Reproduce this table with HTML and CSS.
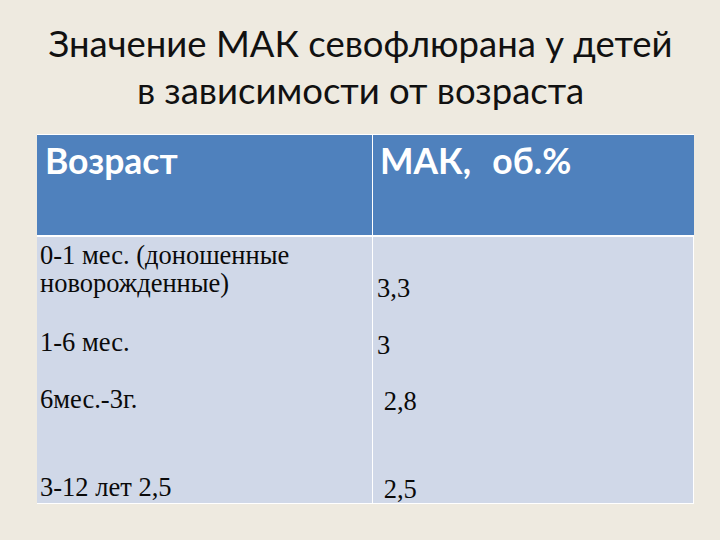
FILE: index.html
```html
<!DOCTYPE html>
<html lang="ru">
<head>
<meta charset="utf-8">
<link rel="stylesheet" href="styles.css">
</head>
<body>
<div class="slide">
  <h1 class="title">Значение МАК севофлюрана у детей<br>в зависимости от возраста</h1>
  <div class="table">
    <div class="th">Возраст</div>
    <div class="th th-right">МАК,&nbsp; об.%</div>
    <div class="body">
      <div class="td td-top">0-1 мес. (доношенные новорожденные)</div>
      <div class="td td-right td-first">3,3</div>
      <div class="td td-second">1-6 мес.</div>
      <div class="td td-right">3</div>
      <div class="td">6мес.-3г.</div>
      <div class="td td-right">&nbsp;2,8</div>
      <div class="td">3-12 лет 2,5</div>
      <div class="td td-right">&nbsp;2,5</div>
    </div>
  </div>
</div>
</body>
</html>
```
FILE: styles.css
```css
* { box-sizing: border-box; }
html, body { margin: 0; padding: 0; }
body {
  width: 720px;
  height: 540px;
  background: #eeeae0;
  overflow: hidden;
}
.slide {
  width: 720px;
  height: 540px;
  padding: 20px 26px 0 37px;
  display: flex;
  flex-direction: column;
}
.title {
  margin: 0;
  font-family: "Lato", "Open Sans", sans-serif;
  font-weight: 400;
  font-size: 36.5px;
  line-height: 47px;
  text-align: center;
  color: #111;
  height: 114px;
  padding-right: 10px;
}
.table {
  width: 657px;
  display: grid;
  grid-template-columns: 335px 322px;
  border-top: 1px solid #fff;
}
.th {
  height: 102px;
  background: #4f81bd;
  color: #fff;
  font-family: "Lato", "Open Sans", sans-serif;
  font-weight: 700;
  font-size: 35.5px;
  line-height: 40px;
  padding: 6px 8px;
  border-bottom: 2px solid #fff;
}
.th-right {
  border-left: 1px solid #fff;
  padding-left: 7px;
  word-spacing: 2px;
}
.body {
  grid-column: 1 / span 2;
  display: grid;
  grid-template-columns: 335px 322px;
  grid-template-rows: 84px 56px 88px 38px;
  background: #d0d8e8;
  border-bottom: 1px solid #fff;
  border-right: 1px solid #fff;
}
.td {
  font-family: "Liberation Serif", "DejaVu Serif", serif;
  font-size: 26.5px;
  line-height: 28px;
  color: #0a0a0a;
  padding: 8px 6px 0 3px;
}
.td-top {
  padding-top: 4px;
}
.td-second {
  padding-top: 7px;
}
.td-right {
  border-left: 1px solid #fff;
  padding: 10px 8px 0 4px;
}
.td-first {
  padding-top: 37px;
}
```
